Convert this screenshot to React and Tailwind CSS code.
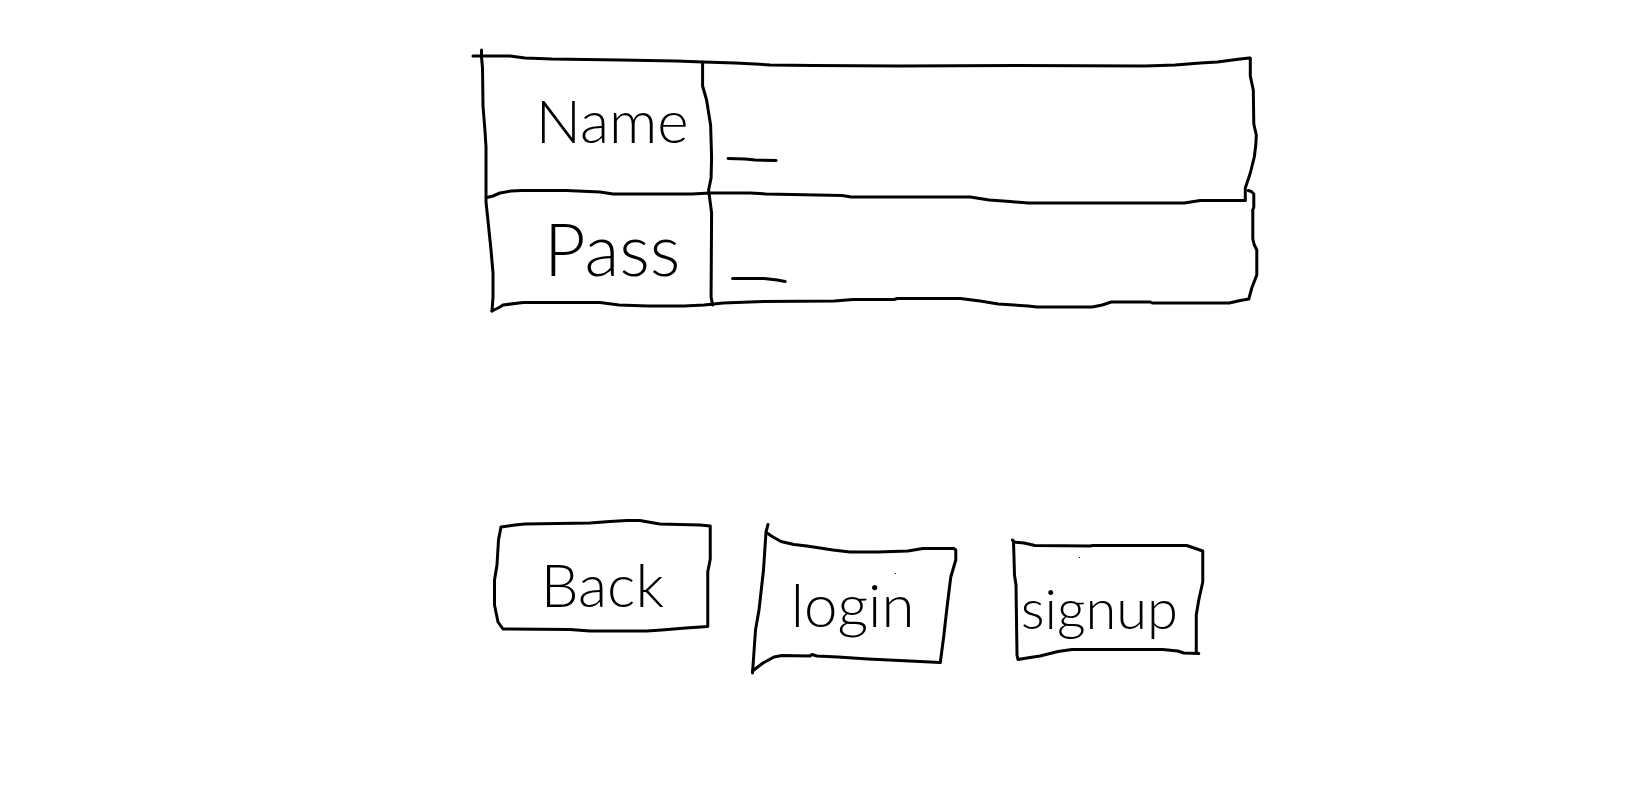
import React from "react";

// Pen strokes of a frame, stretched over the element that holds it.
function Sketch({ viewBox, lines, dot }) {
  return (
    <svg
      viewBox={viewBox}
      preserveAspectRatio="none"
      aria-hidden="true"
      className="pointer-events-none absolute inset-0 h-full w-full overflow-visible fill-none stroke-black stroke-3"
    >
      {lines.map((points) => (
        <polyline
          key={points}
          points={points}
          strokeLinecap="round"
          strokeLinejoin="round"
          vectorEffect="non-scaling-stroke"
        />
      ))}
      {dot && <rect x={dot[0]} y={dot[1]} width="1" height="1" className="fill-black stroke-none" />}
    </svg>
  );
}

const formLines = [
  // top edge and right side of the name row
  "473,56 510,56 525,58 552,59 620,60 676,61 703,62 735,63 755,64 770,65 813,65.5 899,66 1016,65.5 1145,66 1175,65 1200,63 1217,62 1240,59 1249,58 1250,58 1250,76 1253,90 1253.5,124 1256,135 1255.5,145 1254,157 1250,173 1245,188 1245,200",
  // line between the rows
  "487,197.5 493,196 500,193 511,191 522,190.5 566,190.5 600,192 613,194 692,194 710,193 750,193 766,194 842,195.5 851,197 970,197 989,200 1010,201.5 1028,203 1184,203 1200,200.5 1245,200.5",
  // right side of the password row and bottom edge
  "1248,190.5 1251,191.5 1253.5,194 1253.5,207 1252.5,210 1252.5,239 1254,245 1256.5,250 1256.5,275 1251.5,288 1248.5,299 1240,300.5 1229,303 1152,303 1150,302 1111,302 1102,305 1092,307 1037,307 1028,306 998,304 980,301 960,298.5 897,298.5 894,299.5 853,299.5 834,301 763,301.5 723,303 704,305 684,306 648,306 619,305 600,302.5 523,302.5 503,305 500,307 492,311",
  // left side
  "481.5,50 481.5,57 482.5,68 483,106 485,131 486,147 486,202 488,221 491,250 493,273 493,297 492,311",
  // divider
  "702.5,62 702.5,86 706.5,100 710.5,125 711.5,157 711,178 708.5,190 711.5,213 711,297 712.5,305",
  // carets
  "728,158.5 745,159 755,160 776,160.5",
  "732.5,278.5 764,278.5 777,280 785,281.5",
];

const backLines = [
  "501,527 515,525 525,524 590,523 610,521.5 627,520.5 640,520.5 660,524 700,525 710.5,526 710.5,559 708,572 708,626.5 686,628 662,630 647,631 590,631 570,629.5 503,629 498,622 494.5,605 494.5,580 497,565 498.5,540 501,527",
];

const loginLines = [
  "768,524.5 766,532 763.5,570 759,610 755.5,630 752.5,673",
  "767,533 773,537 781,541.5 794,544.5 807,546 833,550 850,552 878,552 908,551 923,548.5 954,548.5 956,550 956,560 951,577 947.5,605 944,636 940.5,662.5 910,661 868,659 838,657 817,656 812,654.5 810,656 782,655.5 774,657 763,663 752.5,671",
];

const signupLines = [
  "1012.5,540 1014,542 1024,543 1035,545.5 1090,546 1093,545.5 1187,545.5 1203,551 1203,582 1199,600 1196.5,615 1196.5,653 1199,653.5 1184,653 1178,651 1163,649.5 1072,649.5 1058,651.5 1040,656 1027,658 1018,659.5 1017,655 1016,585 1014.5,575 1013.5,541",
];

function Field({ id, label, type, className, labelClass }) {
  return (
    <div className={`grid grid-cols-[30%_1fr] ${className}`}>
      <label htmlFor={id} className={`flex items-center justify-center pl-10 leading-none ${labelClass}`}>
        {label}
      </label>
      <input id={id} name={id} type={type} className="min-w-0 bg-transparent px-4 text-5xl outline-none" />
    </div>
  );
}

function SketchButton({ type = "button", className, children, ...sketch }) {
  return (
    <button
      type={type}
      className={`relative flex cursor-pointer items-center justify-center leading-none ${className}`}
    >
      <Sketch {...sketch} />
      {children}
    </button>
  );
}

export default function App() {
  return (
    <main className="min-h-screen bg-white pt-12 pr-[23%] pl-[29%] font-['Lato','Open_Sans',sans-serif] font-light text-black">
      <form onSubmit={(event) => event.preventDefault()}>
        <div className="relative">
          <Sketch viewBox="474 48 785 256" lines={formLines} />
          <Field id="name" label="Name" type="text" className="h-36" labelClass="text-6xl" />
          <Field id="pass" label="Pass" type="password" className="h-28" labelClass="text-7xl" />
        </div>
        <div className="mt-54 grid grid-cols-[216fr_205fr_193fr] items-start gap-12 pr-14 pl-5">
          <SketchButton className="h-28 pt-4 text-6xl" viewBox="494 520 216 112" lines={backLines}>
            Back
          </SketchButton>
          <SketchButton
            type="submit"
            className="h-36 pt-6 pr-4 text-6xl"
            viewBox="758 520 205 144"
            lines={loginLines}
            dot={[895, 573]}
          >
            login
          </SketchButton>
          <SketchButton
            className="mt-4 h-32 pt-4 pr-4 text-[56px]"
            viewBox="1011 536 193 128"
            lines={signupLines}
            dot={[1079, 557]}
          >
            signup
          </SketchButton>
        </div>
      </form>
    </main>
  );
}
